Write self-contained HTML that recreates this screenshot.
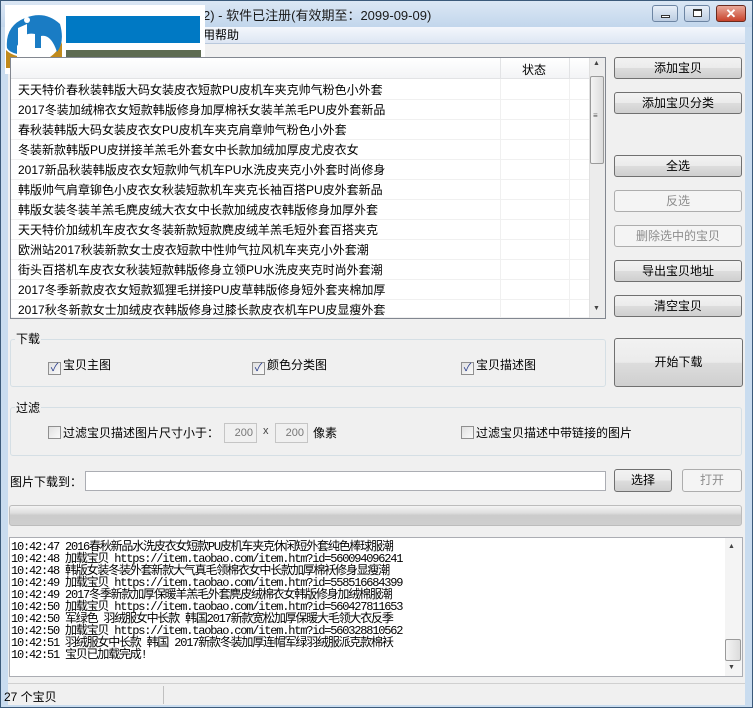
<!DOCTYPE html>
<html><head><meta charset="utf-8"><style>
*{margin:0;padding:0;box-sizing:border-box}
body{width:753px;height:708px;overflow:hidden;background:#f0f0f0;font-family:"Liberation Sans","Noto Sans CJK SC",sans-serif;font-size:12px;color:#000;position:relative}
.a{position:absolute}
.btn{position:absolute;border:1px solid #707070;border-radius:3px;background:linear-gradient(#f2f2f2 0,#ebebeb 50%,#dddddd 51%,#cfcfcf 100%);text-align:center;font-size:12px;line-height:20px}
.dis{border-color:#adadad;color:#8d8d8d;background:#f4f4f4}
.grp{position:absolute;border:1px solid #d5dfe5;border-radius:3px}
.gl{position:absolute;background:#f0f0f0;padding:0 1px;font-size:12px;line-height:14px}
.cb{display:inline-block;width:13px;height:13px;border:1px solid #8f8f8f;background:linear-gradient(135deg,#e0e0e0,#fafafa);vertical-align:-2px;margin-right:2px;position:relative;font-size:11px;line-height:11px;color:#2a3e8c;text-align:center}
.row{position:absolute;left:11px;width:578px;height:20px;border-bottom:1px solid #f0f0f0;line-height:20px;padding-left:7px;white-space:nowrap;overflow:hidden}
.log{font-family:"Liberation Mono","Noto Sans CJK SC",monospace;font-size:12px;line-height:12px;letter-spacing:-1.2px;white-space:pre}
</style></head><body>
<div class="a" style="left:0;top:0;width:753px;height:708px;border:1px solid #3b5a7a;background:#c9dcef"></div>
<div class="a" style="left:1px;top:1px;width:751px;height:26px;background:linear-gradient(#dbe7f4,#c2d6ec)"></div>
<div class="a" style="left:203px;top:5px;font-size:13px;color:#1a1a1a">2) - 软件已注册(有效期至：2099-09-09)</div>
<div class="a" style="left:652px;top:5px;width:26px;height:17px;border:1px solid #6d85a3;border-radius:3px;background:linear-gradient(#e8eff8,#bccde2)"><div class="a" style="left:8px;top:9px;width:9px;height:3px;border:1px solid #333;background:#fff"></div></div>
<div class="a" style="left:684px;top:5px;width:26px;height:17px;border:1px solid #6d85a3;border-radius:3px;background:linear-gradient(#e8eff8,#bccde2)"><div class="a" style="left:8px;top:3px;width:9px;height:8px;border:1px solid #333;border-top-width:2px;background:#fff"></div></div>
<div class="a" style="left:716px;top:5px;width:30px;height:17px;border:1px solid #6b2a1e;border-radius:3px;background:linear-gradient(#e9a99a,#c8422b);color:#fff;font-weight:bold;text-align:center;line-height:15px;font-size:13px">✕</div>
<div class="a" style="left:8px;top:27px;width:737px;height:17px;background:linear-gradient(#f4f7fc,#dde6f3);border-bottom:1px solid #b9c9dd"></div>
<div class="a" style="left:203px;top:27px;line-height:16px">用帮助</div>
<div class="a" style="left:8px;top:44px;width:737px;height:639px;background:#f0f0f0"></div>
<div class="a" style="left:5px;top:5px;width:200px;height:69px;background:#fff"></div>
<svg class="a" style="left:5px;top:12px" width="58" height="56" viewBox="0 0 58 56">
<path d="M1 38 L1 56 L57 56 L57 30 Q52 42 40 48 L40 56 L30 56 L30 46 L22 46 L22 56 L12 56 L12 44 Q5 42 1 38Z" fill="#c08a1c"/>
<path d="M2 36 Q0 14 20 6 Q40 -2 55 12 Q60 30 52 40 Q46 22 36 24 L36 36 L30 36 L30 22 Q20 20 16 28 L12 34 L12 42 Q4 40 2 36Z" fill="#1a7cc4"/>
<path d="M13 16 L22 12 L22 40 L13 40Z" fill="#fff"/><circle cx="22" cy="8" r="3" fill="#fff"/>
</svg>
<div class="a" style="left:66px;top:16px;width:134px;height:27px;background:#0079c4"></div>
<div class="a" style="left:66px;top:50px;width:135px;height:17px;background:#5e6b52"></div>
<div class="a" style="left:10px;top:57px;width:596px;height:262px;border:1px solid #828790;background:#fff"></div>
<div class="a" style="left:11px;top:58px;width:578px;height:21px;background:linear-gradient(#fff,#f3f4f6);border-bottom:1px solid #e2e3e5"></div>
<div class="a" style="left:500px;top:58px;width:1px;height:21px;background:#e2e3e5"></div>
<div class="a" style="left:569px;top:58px;width:1px;height:21px;background:#e2e3e5"></div>
<div class="a" style="left:522px;top:61px">状态</div>
<div class="a" style="left:500px;top:79px;width:1px;height:239px;background:#f0f0f0"></div>
<div class="a" style="left:569px;top:79px;width:1px;height:239px;background:#f0f0f0"></div>
<div class="row" style="top:80px">天天特价春秋装韩版大码女装皮衣短款PU皮机车夹克帅气粉色小外套</div>
<div class="row" style="top:100px">2017冬装加绒棉衣女短款韩版修身加厚棉袄女装羊羔毛PU皮外套新品</div>
<div class="row" style="top:120px">春秋装韩版大码女装皮衣女PU皮机车夹克肩章帅气粉色小外套</div>
<div class="row" style="top:140px">冬装新款韩版PU皮拼接羊羔毛外套女中长款加绒加厚皮尤皮衣女</div>
<div class="row" style="top:160px">2017新品秋装韩版皮衣女短款帅气机车PU水洗皮夹克小外套时尚修身</div>
<div class="row" style="top:180px">韩版帅气肩章铆色小皮衣女秋装短款机车夹克长袖百搭PU皮外套新品</div>
<div class="row" style="top:200px">韩版女装冬装羊羔毛麂皮绒大衣女中长款加绒皮衣韩版修身加厚外套</div>
<div class="row" style="top:220px">天天特价加绒机车皮衣女冬装新款短款麂皮绒羊羔毛短外套百搭夹克</div>
<div class="row" style="top:240px">欧洲站2017秋装新款女士皮衣短款中性帅气拉风机车夹克小外套潮</div>
<div class="row" style="top:260px">街头百搭机车皮衣女秋装短款韩版修身立领PU水洗皮夹克时尚外套潮</div>
<div class="row" style="top:280px">2017冬季新款皮衣女短款狐狸毛拼接PU皮草韩版修身短外套夹棉加厚</div>
<div class="row" style="top:300px;height:18px">2017秋冬新款女士加绒皮衣韩版修身过膝长款皮衣机车PU皮显瘦外套</div>
<div class="a" style="left:589px;top:58px;width:16px;height:260px;background:#ececec;border-left:1px solid #e0e0e0"></div>
<div class="a" style="left:590px;top:76px;width:14px;height:88px;border:1px solid #9a9a9a;border-radius:2px;background:linear-gradient(90deg,#f4f4f4,#dcdcdc)"></div>
<div class="a" style="left:593px;top:114px;font-size:8px;line-height:4px;color:#555">≡</div>
<div class="a" style="left:593px;top:60px;font-size:7px;color:#444">▲</div>
<div class="a" style="left:593px;top:305px;font-size:7px;color:#444">▼</div>
<div class="btn" style="left:614px;top:57px;width:128px;height:22px">添加宝贝</div>
<div class="btn" style="left:614px;top:92px;width:128px;height:22px">添加宝贝分类</div>
<div class="btn" style="left:614px;top:155px;width:128px;height:22px">全选</div>
<div class="btn dis" style="left:614px;top:190px;width:128px;height:22px">反选</div>
<div class="btn dis" style="left:614px;top:225px;width:128px;height:22px">删除选中的宝贝</div>
<div class="btn" style="left:614px;top:260px;width:128px;height:22px">导出宝贝地址</div>
<div class="btn" style="left:614px;top:295px;width:128px;height:22px">清空宝贝</div>
<div class="btn" style="left:614px;top:338px;width:129px;height:49px;line-height:46px">开始下载</div>
<div class="grp" style="left:10px;top:339px;width:596px;height:48px"></div>
<div class="gl" style="left:15px;top:332px">下载</div>
<div class="a" style="left:48px;top:356px"><span class="cb">✓</span>宝贝主图</div>
<div class="a" style="left:252px;top:356px"><span class="cb">✓</span>颜色分类图</div>
<div class="a" style="left:461px;top:356px"><span class="cb">✓</span>宝贝描述图</div>
<div class="grp" style="left:10px;top:407px;width:732px;height:49px"></div>
<div class="gl" style="left:15px;top:401px">过滤</div>
<div class="a" style="left:48px;top:424px"><span class="cb"></span>过滤宝贝描述图片尺寸小于：</div>
<div class="a" style="left:224px;top:423px;width:33px;height:20px;border:1px solid #c5c5c5;background:#f0f0f0;color:#777;text-align:right;padding-right:3px;line-height:18px;font-size:11px">200</div>
<div class="a" style="left:263px;top:425px;font-size:11px;color:#444">x</div>
<div class="a" style="left:275px;top:423px;width:33px;height:20px;border:1px solid #c5c5c5;background:#f0f0f0;color:#777;text-align:right;padding-right:3px;line-height:18px;font-size:11px">200</div>
<div class="a" style="left:313px;top:424px">像素</div>
<div class="a" style="left:461px;top:424px"><span class="cb"></span>过滤宝贝描述中带链接的图片</div>
<div class="a" style="left:10px;top:473px">图片下载到：</div>
<div class="a" style="left:85px;top:471px;width:521px;height:20px;border:1px solid #abadb3;background:#fff"></div>
<div class="btn" style="left:614px;top:469px;width:58px;height:23px">选择</div>
<div class="btn dis" style="left:682px;top:469px;width:60px;height:23px">打开</div>
<div class="a" style="left:9px;top:505px;width:733px;height:21px;border:1px solid #bcbcbc;border-radius:3px;background:linear-gradient(#f3f3f3,#e0e0e0 35%,#cbcbcb 50%,#cfcfcf 100%)"></div>
<div class="a" style="left:9px;top:537px;width:734px;height:140px;border:1px solid #abadb3;background:#fff"></div>
<div class="a log" style="left:11px;top:541px">10:42:47 2016春秋新品水洗皮衣女短款PU皮机车夹克休闲短外套纯色棒球服潮
10:42:48 加载宝贝 https://item.taobao.com/item.htm?id=560094096241
10:42:48 韩版女装冬装外套新款大气真毛领棉衣女中长款加厚棉袄修身显瘦潮
10:42:49 加载宝贝 https://item.taobao.com/item.htm?id=558516684399
10:42:49 2017冬季新款加厚保暖羊羔毛外套麂皮绒棉衣女韩版修身加绒棉服潮
10:42:50 加载宝贝 https://item.taobao.com/item.htm?id=560427811653
10:42:50 军绿色 羽绒服女中长款 韩国2017新款宽松加厚保暖大毛领大衣反季
10:42:50 加载宝贝 https://item.taobao.com/item.htm?id=560328810562
10:42:51 羽绒服女中长款 韩国 2017新款冬装加厚连帽军绿羽绒服派克款棉袄
10:42:51 宝贝已加载完成!</div>
<div class="a" style="left:725px;top:538px;width:17px;height:138px;background:#f4f4f4"></div>
<div class="a" style="left:728px;top:543px;font-size:7px;color:#444">▲</div>
<div class="a" style="left:725px;top:639px;width:16px;height:22px;border:1px solid #9a9a9a;border-radius:2px;background:linear-gradient(90deg,#f4f4f4,#dcdcdc)"></div>
<div class="a" style="left:728px;top:664px;font-size:7px;color:#444">▼</div>
<div class="a" style="left:8px;top:683px;width:737px;height:22px;border-top:1px solid #d0d0d0;background:#f0f0f0"></div>
<div class="a" style="left:163px;top:686px;width:1px;height:18px;background:#c0c0c0"></div>
<div class="a" style="left:4px;top:688px">27 个宝贝</div>
</body></html>
